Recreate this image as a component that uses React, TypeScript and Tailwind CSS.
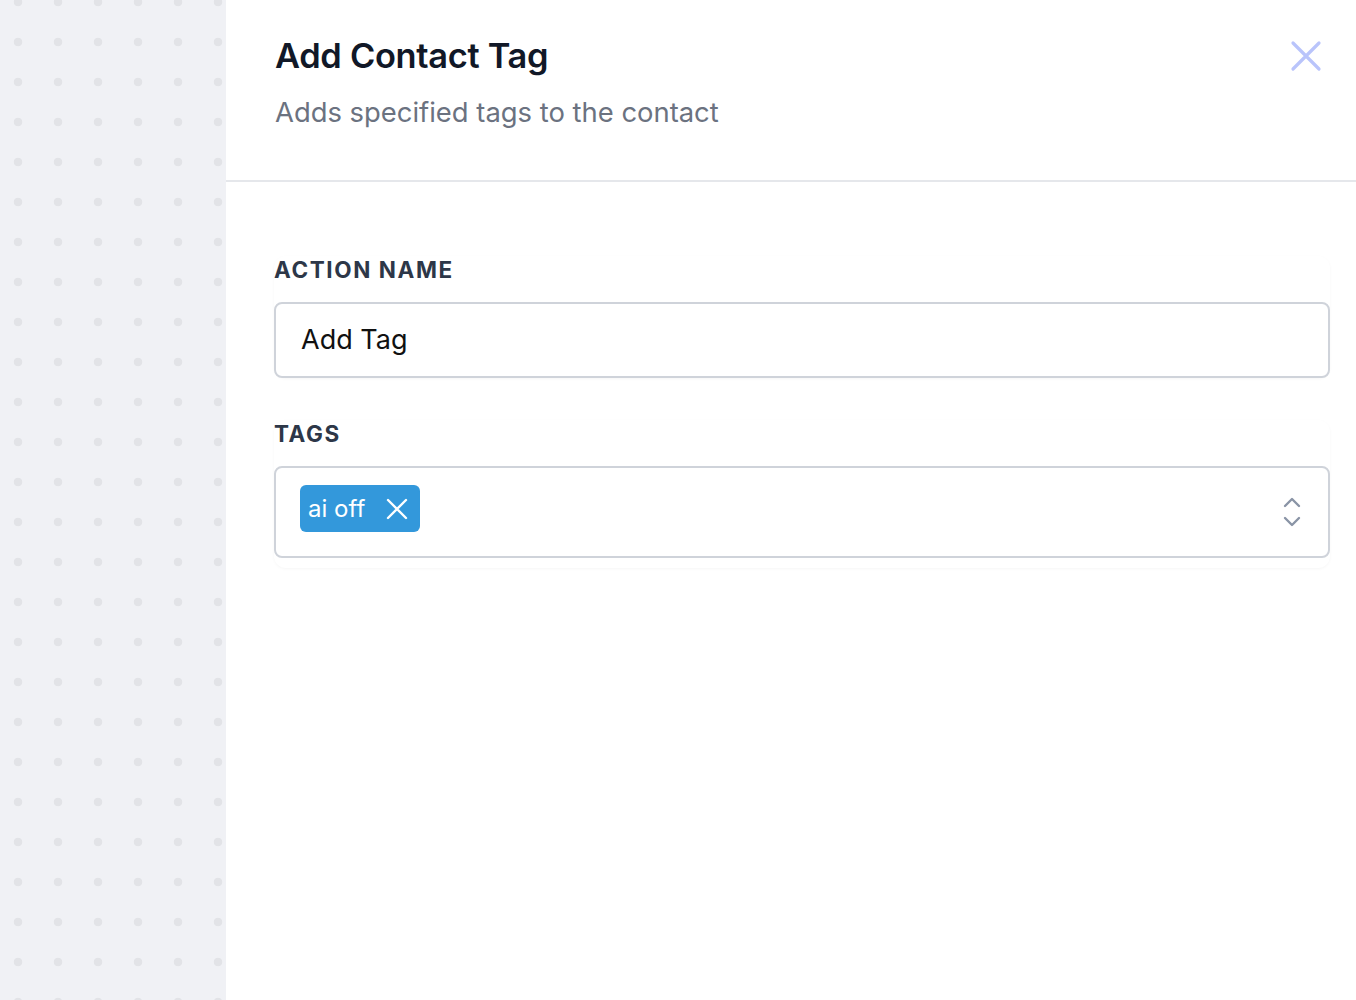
import React from "react";

export default function App() {
  return (
    <div className="flex h-[1000px] w-[1356px] overflow-hidden bg-white" style={{ fontFamily: "Inter, 'Noto Sans', sans-serif" }}>
      <div className="h-full w-[226px] shrink-0 bg-[#f0f1f5] bg-[radial-gradient(circle,#e2e3e7_4px,transparent_4.6px)] bg-[length:40px_40px] bg-[position:-2px_-18px]" />
      <div className="flex min-w-0 flex-1 flex-col">
        <div className="flex items-start justify-between border-b-2 border-[#e5e7eb] pl-[49px] pr-[28px] pt-[33px] h-[182px]">
          <div>
            <h1 className="text-[34.4px] font-semibold leading-[46px] tracking-[-0.3px] text-[#111827]">Add Contact Tag</h1>
            <p className="mt-[16px] text-[27.4px] leading-[34px] text-[#6b7280]">Adds specified tags to the contact</p>
          </div>
          <button className="mt-[1px] flex h-[44px] w-[44px] items-center justify-center text-[#b9c4fb]">
            <svg width="32" height="32" viewBox="0 0 32 32" fill="none" stroke="currentColor" strokeWidth="3.2" strokeLinecap="round">
              <path d="M3 3 L29 29 M29 3 L3 29" />
            </svg>
          </button>
        </div>
        <div className="flex flex-col gap-[42px] pl-[48px] pr-[26px] pt-[74px]">
          <div className="rounded-[12px] shadow-[0_1px_3px_rgba(0,0,0,0.04)]">
            <label className="block text-[22.5px] font-bold leading-[28px] tracking-[1.6px] text-[#2d3748]">ACTION NAME</label>
            <div className="mt-[18px] flex h-[76px] items-center rounded-[8px] border-2 border-[#cfd3da] px-[25px]">
              <span className="mt-[1px] text-[27px] text-[#111]">Add Tag</span>
            </div>
          </div>
          <div className="rounded-[12px] pb-[10px] shadow-[0_1px_3px_rgba(0,0,0,0.04)]">
            <label className="block text-[22.5px] font-bold leading-[28px] tracking-[1.6px] text-[#2d3748]">TAGS</label>
            <div className="mt-[18px] flex h-[92px] items-center justify-between rounded-[8px] border-2 border-[#cfd3da] pl-[24px] pr-[26px]">
              <span className="-mt-[7px] flex h-[47px] items-center gap-[21px] rounded-[6px] bg-[#3398db] pl-[8px] pr-[12px] text-[24px] text-white">
                <span>ai off</span>
                <svg width="22" height="22" viewBox="0 0 22 22" fill="none" stroke="currentColor" strokeWidth="2.4" strokeLinecap="round">
                  <path d="M2 2 L20 20 M20 2 L2 20" />
                </svg>
              </span>
              <svg width="20" height="32" viewBox="0 0 20 32" fill="none" stroke="#8a94a6" strokeWidth="2.4" strokeLinecap="round" strokeLinejoin="round">
                <path d="M3 10 L10 3 L17 10" />
                <path d="M3 22 L10 29 L17 22" />
              </svg>
            </div>
          </div>
        </div>
      </div>
    </div>
  );
}
